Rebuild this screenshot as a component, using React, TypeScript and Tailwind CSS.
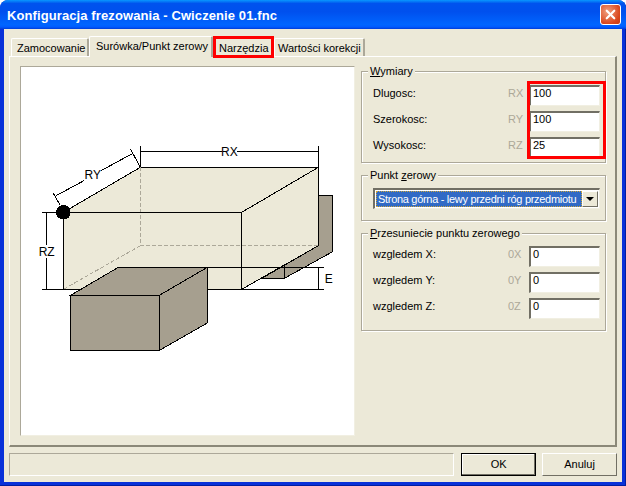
import React from 'react';
import { X } from 'lucide-react';

const uiFont = "font-['Liberation_Sans',Arial,sans-serif]";

const tabs = [
  { label: 'Zamocowanie', width: 'w-[78px] pl-[5px]' },
  { label: 'Surówka/Punkt zerowy', width: 'w-[124px] pl-[6px]' },
  { label: 'Narzędzia', width: 'w-[61px] pl-[5px]' },
  { label: 'Wartości korekcji', width: 'w-[91px] pl-[3px]' },
];

// sunken white field used by all the edit boxes
const Field = ({ value }: { value: string }) => (
  <div className="w-[71px] h-[21px] bg-white border-t-2 border-l-2 border-t-[#716f64] border-l-[#716f64] border-r border-b border-r-[#f1efe2] border-b-[#f1efe2] pl-[2px] text-[11px] leading-[13px] text-black">
    {value}
  </div>
);

const Row = ({ label, code, value }: { label: string; code: string; value: string }) => (
  <div className="flex items-start h-[21px] mb-[5px]">
    <span className="w-[135px] text-[11px] leading-[17px] text-black">{label}</span>
    <span className="w-[21px] text-[11px] leading-[17px] text-[#aca899]">{code}</span>
    <Field value={value} />
  </div>
);

const Group = ({ title, className, children }: { title: React.ReactNode; className: string; children: React.ReactNode }) => (
  <div className={`relative w-[245px] border border-[#aca899] shadow-[inset_1px_1px_0_#fff,1px_1px_0_#fff] pl-[11px] ${className}`}>
    <span className="absolute left-[6px] -top-[7px] px-[2px] bg-[#ece9d8] text-[11px] leading-[13px] text-black whitespace-nowrap">{title}</span>
    {children}
  </div>
);

// units are 1/3 px, taken straight from a 3x crop of the drawing
const Drawing = () => (
  <svg width={333} height={368} viewBox="-27 -189 999 1104" shapeRendering="crispEdges" className="block">
    <g stroke="#000" strokeWidth={3} fill="none">
      {/* rear clamp */}
      <polygon points="865,197 908,197 908,365 763,445 695,445 865,347" fill="#a69f8f" />
      <line x1={763} y1={405} x2={763} y2={445} />
      {/* raw part */}
      <polygon points="100,247 331,112 865,112 865,347 635,478 100,478" fill="#ece9d8" />
      <g stroke="#aca899" strokeDasharray="12 6">
        <line x1={331} y1={112} x2={331} y2={347} />
        <line x1={331} y1={347} x2={865} y2={347} />
        <line x1={331} y1={347} x2={100} y2={478} />
      </g>
      <polyline points="100,247 635,247 865,112" />
      <line x1={635} y1={247} x2={635} y2={478} />
      {/* dimensions */}
      <line x1={331} y1={48} x2={331} y2={112} />
      <line x1={865} y1={48} x2={865} y2={112} />
      <line x1={331} y1={65} x2={575} y2={65} />
      <line x1={622} y1={65} x2={865} y2={65} />
      <line x1={78} y1={197} x2={162} y2={152} />
      <line x1={213} y1={122} x2={305} y2={72} />
      <line x1={70} y1={190} x2={90} y2={225} />
      <line x1={302} y1={58} x2={331} y2={112} />
      <line x1={50} y1={247} x2={50} y2={345} />
      <line x1={50} y1={385} x2={50} y2={478} />
      <line x1={37} y1={247} x2={100} y2={247} />
      <line x1={37} y1={478} x2={882} y2={478} />
      <line x1={532} y1={412} x2={882} y2={412} />
      <line x1={865} y1={412} x2={865} y2={478} />
      {/* front clamp */}
      <polygon points="122,496 265,412 532,412 388,496" fill="#a69f8f" />
      <polygon points="388,496 532,412 532,579 388,661" fill="#a69f8f" />
      <rect x={122} y={496} width={266} height={165} fill="#a69f8f" />
    </g>
    <circle cx={100} cy={247} r={22} fill="#000" />
    <g fontFamily="'Liberation Sans',Arial,sans-serif" fontSize={36} fill="#000" textAnchor="middle">
      <text x={598} y={78}>RX</text>
      <text x={188} y={148}>RY</text>
      <text x={50} y={378}>RZ</text>
      <text x={896} y={458}>E</text>
    </g>
  </svg>
);

export default function App() {
  return (
    <div className={`w-[626px] h-[486px] bg-white overflow-hidden ${uiFont}`}>
      <div className="w-full h-full flex flex-col rounded-t-[8px] bg-[#0831d9] shadow-[inset_-1px_-1px_0_#001ea0] overflow-hidden">
        {/* title bar */}
        <div className="h-[29px] shrink-0 flex items-center justify-between pl-[7px] pr-[5px] bg-[linear-gradient(180deg,#0997ff_0%,#0053ee_12%,#0050ee_40%,#0066ff_85%,#005bff_93%,#003dd7_100%)]">
          <span className="mt-[2px] text-[13px] font-bold text-white tracking-[0.1px]">Konfiguracja frezowania - Cwiczenie 01.fnc</span>
          <div className="w-[21px] h-[21px] rounded-[3px] border border-white bg-[radial-gradient(circle_at_35%_35%,#f0a080,#d9461c_70%,#c23a12)] flex items-center justify-center">
            <X size={15} strokeWidth={3.5} className="text-white" />
          </div>
        </div>

        {/* client area */}
        <div className="flex-1 mx-[4px] mb-[4px] bg-[#ece9d8] flex flex-col px-[5px] pt-[7px]">
          <div className="flex h-[20px] items-end pl-[2px] relative">
            {tabs.map((tab, i) => (
              <div
                key={tab.label}
                className={
                  i === 1
                    ? `${tab.width} h-[21px] -mb-[1px] relative bg-[#ece9d8] rounded-t-[2px] border-t border-l border-white border-r-2 border-r-[#aca899] text-[11px] leading-[18px] text-black whitespace-nowrap`
                    : `${tab.width} h-[18px] rounded-t-[2px] border-t border-l border-white border-r-2 border-r-[#aca899] text-[11px] leading-[18px] text-black whitespace-nowrap`
                }
              >
                {tab.label}
              </div>
            ))}
          </div>

          {/* tab page */}
          <div className="h-[391px] border-t border-l border-white border-r-2 border-b-2 border-r-[#8b8878] border-b-[#8b8878] flex pl-[10px] pt-[9px]">
            <div className="w-[335px] h-[370px] bg-white border border-b-[#f1efe2] border-r-[#f1efe2] border-t-[#aca899] border-l-[#aca899] shrink-0 overflow-hidden">
              <Drawing />
            </div>
            <div className="ml-[6px] flex flex-col pt-[5px]">
              <Group title={<><span className="underline">W</span>ymiary</>} className="h-[92px] pt-[13px]">
                <Row label="Dlugosc:" code="RX" value="100" />
                <Row label="Szerokosc:" code="RY" value="100" />
                <Row label="Wysokosc:" code="RZ" value="25" />
              </Group>
              <Group title={<>Punkt <span className="underline">z</span>erowy</>} className="h-[46px] mt-[12px] pt-[12px]">
                <div className="w-[227px] h-[21px] bg-white border-t-2 border-l-2 border-t-[#716f64] border-l-[#716f64] border-r border-b border-r-[#f1efe2] border-b-[#f1efe2] flex p-[1px]">
                  <span className="flex-1 bg-[#316ac5] border border-dotted border-[#cea53a] text-white text-[11px] tracking-[-0.3px] leading-[14px] pl-[1px] whitespace-nowrap">Strona górna - lewy przedni róg przedmiotu</span>
                  <span className="w-[16px] bg-[#ece9d8] border border-t-white border-l-white border-r-[#716f64] border-b-[#716f64] flex items-center justify-center">
                    <span className="w-0 h-0 border-x-[4px] border-x-transparent border-t-[4px] border-t-black" />
                  </span>
                </div>
              </Group>
              <Group title={<><span className="underline">P</span>rzesuniecie punktu zerowego</>} className="h-[98px] mt-[12px] pt-[12px]">
                <Row label="wzgledem X:" code="0X" value="0" />
                <Row label="wzgledem Y:" code="0Y" value="0" />
                <Row label="wzgledem Z:" code="0Z" value="0" />
              </Group>
            </div>
          </div>

          {/* status and buttons */}
          <div className="flex mt-[6px] h-[23px]">
            <div className="w-[446px] border-t border-l border-t-[#aca899] border-l-[#aca899] border-r border-b border-r-white border-b-white" />
            <button className="ml-[7px] w-[75px] border border-black bg-[#ece9d8] shadow-[inset_-1px_-1px_0_#716f64,inset_1px_1px_0_#fff] text-[11px] text-black">OK</button>
            <button className="ml-[6px] w-[75px] bg-[#ece9d8] border-t border-l border-white border-r border-b border-r-[#716f64] border-b-[#716f64] text-[11px] text-black">Anuluj</button>
          </div>
        </div>
      </div>

      {/* red annotation frames from the original picture */}
      <div className="absolute left-[213px] top-[36px] w-[61px] h-[22px] border-[3px] border-[#ff0000]" />
      <div className="absolute left-[527px] top-[81px] w-[79px] h-[78px] border-[3px] border-[#ff0000]" />
    </div>
  );
}
